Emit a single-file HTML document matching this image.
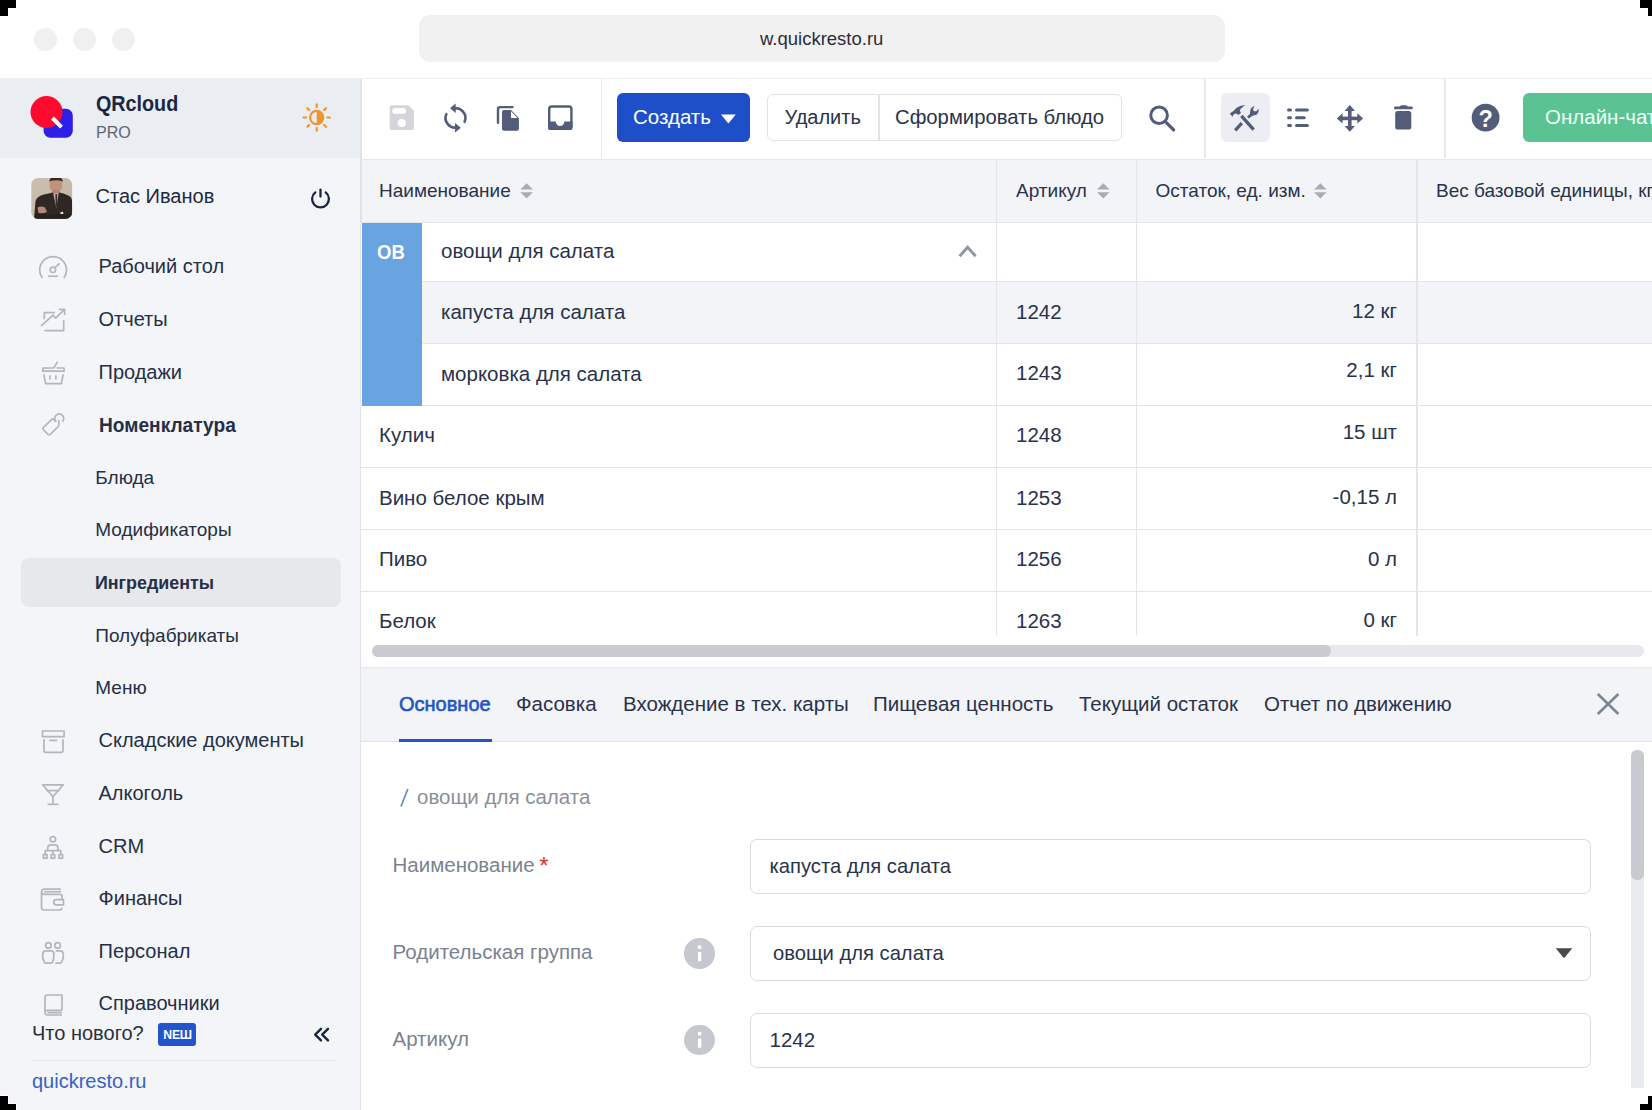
<!DOCTYPE html>
<html><head><meta charset="utf-8">
<style>
*{margin:0;padding:0;box-sizing:border-box}
html,body{width:1652px;height:1110px;overflow:hidden;background:#fff}
body{position:relative;font-family:"Liberation Sans",sans-serif;color:#1f2a44}
.a{position:absolute}
.t{position:absolute;white-space:nowrap;line-height:20px;font-size:20px}
.c{position:absolute;background:#000}
svg{position:absolute;overflow:visible}
</style></head><body>
<div class="a" style="left:0px;top:0px;width:1652px;height:79px;background:#fff;border-bottom:1px solid #ededed"></div>
<div class="a" style="left:34.0px;top:28px;width:23px;height:23px;background:#f0f0f0;border-radius:50%"></div>
<div class="a" style="left:73.0px;top:28px;width:23px;height:23px;background:#f0f0f0;border-radius:50%"></div>
<div class="a" style="left:112.0px;top:28px;width:23px;height:23px;background:#f0f0f0;border-radius:50%"></div>
<div class="a" style="left:419px;top:15px;width:806px;height:47px;background:#f1f1f1;border-radius:11px"></div>
<div class="t" style="left:760.00px;top:28.69px;font-size:18.5px;color:#2a2d3a">w.quickresto.ru</div>
<div class="a" style="left:0px;top:79px;width:362px;height:1031px;background:#f3f5f8;border-right:2px solid #e2e3e7"></div>
<div class="a" style="left:0px;top:79px;width:360px;height:79px;background:#eaedf2;"></div>
<svg style="left:0;top:0" width="1" height="1">
<rect x="43.6" y="108.8" width="29.2" height="29" rx="7" fill="#2e1ee6"/>
<circle cx="46.5" cy="112" r="16" fill="#ff0a2e"/>
<line x1="52.5" y1="118" x2="61.5" y2="127.2" stroke="#fff" stroke-width="4"/>
</svg><div class="t" style="left:95.50px;top:94.15px;font-size:21.8px;transform:scaleX(0.905);transform-origin:0 0;color:#1a2744;font-weight:700">QRcloud</div>
<div class="t" style="left:95.80px;top:121.81px;font-size:17.3px;transform:scaleX(0.93);transform-origin:0 0;color:#5d6573">PRO</div>
<svg style="left:0;top:0" width="1" height="1"><g fill="none" stroke="#f0952e" stroke-width="2.2" stroke-linecap="round"><circle cx="316.7" cy="117.5" r="6.6"/><line x1="327.30" y1="117.50" x2="329.90" y2="117.50"/><line x1="324.20" y1="125.00" x2="326.03" y2="126.83"/><line x1="316.70" y1="128.10" x2="316.70" y2="130.70"/><line x1="309.20" y1="125.00" x2="307.37" y2="126.83"/><line x1="306.10" y1="117.50" x2="303.50" y2="117.50"/><line x1="309.20" y1="110.00" x2="307.37" y2="108.17"/><line x1="316.70" y1="106.90" x2="316.70" y2="104.30"/><line x1="324.20" y1="110.00" x2="326.03" y2="108.17"/></g><path d="M316.7 110.9 A6.6 6.6 0 0 1 316.7 124.1 Z" fill="#f0952e"/></svg><svg style="left:0;top:0" width="1" height="1">
<defs><clipPath id="av"><rect x="31.3" y="178" width="40.8" height="40.7" rx="6.5"/></clipPath>
<linearGradient id="avbg" x1="0" y1="0" x2="1" y2="1"><stop offset="0" stop-color="#cdbfb2"/><stop offset="1" stop-color="#c2b2a3"/></linearGradient></defs>
<g clip-path="url(#av)">
<rect x="31" y="178" width="42" height="42" fill="url(#avbg)"/>
<ellipse cx="56" cy="185" rx="6.4" ry="8.2" fill="#bf927d"/>
<path d="M49.2 182 Q49.5 176.5 56 176.5 Q62.6 176.5 63 182 L61.8 181 Q56 179.4 50.4 181 Z" fill="#3b2a22"/>
<rect x="52.5" y="190" width="7" height="5" fill="#b08472"/>
<path d="M34 219 L35.5 201 Q37 196 44 194.5 L53 192.6 L56 195 L59.5 192.6 Q68 194.5 71 197.5 Q72.5 200 72.5 204 V219 Z" fill="#2f2725"/>
<path d="M53.2 193.2 L58.6 193.2 L56.4 208.5 Z" fill="#c8aca2"/>
<path d="M55.4 194 L57 194 L57.5 206 L55.8 208 Z" fill="#3d2c2c"/>
<path d="M37.5 207.5 Q41 205.5 45 207.5 L47 212 Q43 214 38.5 213 Z" fill="#b48872"/>
<path d="M59.5 213 L63 211.5 L63.5 215 Z" fill="#f0ece8"/>
<path d="M35 214 H72 V219 H35 Z" fill="#262020"/>
</g></svg><div class="t" style="left:95.50px;top:186.07px;font-size:20px;color:#1e2a40">Стас Иванов</div>
<svg style="left:0;top:0" width="1" height="1"><g fill="none" stroke="#1a2540" stroke-width="2.3" stroke-linecap="round">
<path d="M315.3 192.4 A8.4 8.4 0 1 0 325.7 192.4"/><line x1="320.5" y1="189.6" x2="320.5" y2="196.6"/></g></svg><div class="a" style="left:21px;top:558px;width:320px;height:49px;background:#e6e8ec;border-radius:8px"></div>
<div class="t" style="left:98.50px;top:256.17px;font-size:20px;color:#252f47">Рабочий стол</div>
<div class="t" style="left:98.50px;top:308.97px;font-size:20px;color:#252f47">Отчеты</div>
<div class="t" style="left:98.50px;top:361.87px;font-size:20px;color:#252f47">Продажи</div>
<div class="t" style="left:98.50px;top:414.67px;font-size:20px;transform:scaleX(0.957);transform-origin:0 0;color:#252f47;font-weight:700">Номенклатура</div>
<div class="t" style="left:95.30px;top:467.62px;font-size:19px;color:#252f47">Блюда</div>
<div class="t" style="left:95.30px;top:520.02px;font-size:19px;color:#252f47">Модификаторы</div>
<div class="t" style="left:95.30px;top:572.52px;font-size:19px;transform:scaleX(0.94);transform-origin:0 0;color:#252f47;font-weight:700">Ингредиенты</div>
<div class="t" style="left:95.30px;top:625.62px;font-size:19px;color:#252f47">Полуфабрикаты</div>
<div class="t" style="left:95.30px;top:677.92px;font-size:19px;color:#252f47">Меню</div>
<div class="t" style="left:98.50px;top:730.07px;font-size:20px;color:#252f47">Складские документы</div>
<div class="t" style="left:98.50px;top:782.87px;font-size:20px;color:#252f47">Алкоголь</div>
<div class="t" style="left:98.50px;top:835.77px;font-size:20px;color:#252f47">CRM</div>
<div class="t" style="left:98.50px;top:888.07px;font-size:20px;color:#252f47">Финансы</div>
<div class="t" style="left:98.50px;top:941.17px;font-size:20px;color:#252f47">Персонал</div>
<div class="t" style="left:98.50px;top:993.47px;font-size:20px;color:#252f47">Справочники</div>
<svg style="left:0;top:0" width="1" height="1"><g fill="none" stroke="#b3b6bc" stroke-width="1.7" stroke-linecap="butt" stroke-linejoin="round">
<path d="M42.4 278 A13.4 13.4 0 1 1 63.8 278"/>
<circle cx="52.9" cy="269.8" r="2.7"/>
<line x1="55" y1="267.6" x2="59.6" y2="263.3"/>
<line x1="48" y1="276.2" x2="57.8" y2="276.2"/>

<path d="M44.3 319.2 V312.6 H54.8"/>
<path d="M44.4 330.6 H63.7 V320.2"/>
<path d="M41.1 325.9 L53.1 315.2 L55.7 318.2 L64.2 309.7"/>
<path d="M58.9 309.3 H64.6 V315"/>

<path d="M53 368 H42.8 V371.2 H64 V368 H56.5"/>
<line x1="53.5" y1="368.5" x2="57.6" y2="361.8"/>
<path d="M43.8 374.4 L45.6 383.6 H61.4 L63.2 374.4"/>
<line x1="49.9" y1="375.2" x2="49.9" y2="379.4"/>
<line x1="55.9" y1="375.2" x2="55.9" y2="379.4"/>

<path d="M56.2 421.8 L53.7 419.3 Q52.7 418.3 51.7 419.3 L43.3 427.6 Q42.3 428.6 43.3 429.6 L48.2 434.5 Q49.2 435.5 50.2 434.5 L58 426.7 Q58.8 425.9 58.8 424.8 V419.9"/>
<path d="M56.1 421.7 A4.5 4.5 0 1 1 62.3 421.7"/>

<rect x="42.5" y="731" width="21.6" height="5.6"/>
<path d="M44 739.3 V750.6 Q44 752.4 45.8 752.4 H61.2 Q63 752.4 63 750.6 V739.3"/>
<line x1="49.3" y1="740.4" x2="57.2" y2="740.4"/>

<path d="M42.6 784.8 H63.3 L52.95 796.6 Z"/>
<line x1="46.5" y1="790.6" x2="59.4" y2="790.6"/>
<line x1="52.95" y1="797" x2="52.95" y2="804.2"/>
<line x1="47.6" y1="804.3" x2="58.4" y2="804.3"/>

<circle cx="52.9" cy="839.2" r="2.7"/>
<path d="M47.7 850.6 V848.4 Q47.7 844.8 51.2 844.8 H54.6 Q58.1 844.8 58.1 848.4 V850.6"/>
<path d="M45.2 854.4 V850.7 H60.8 V854.4 M52.9 850.7 V854.4"/>
<rect x="43.4" y="854.6" width="3.6" height="3.6"/>
<rect x="51.1" y="854.6" width="3.6" height="3.6"/>
<rect x="59" y="854.6" width="3.6" height="3.6"/>

<path d="M60.9 889.2 H44.4 Q41.5 889.2 41.5 892 V907.3 Q41.5 910 44.2 910 H59.4 Q61.8 910 61.9 907.8"/>
<path d="M44.2 891.8 H60.9"/>
<path d="M41.8 892.6 Q42.5 894.4 44.8 894.4 H59.8 Q62.1 894.4 62.1 896.6 V899.4"/>
<path d="M63.5 899.6 H56.3 Q53.7 899.6 53.7 902.25 Q53.7 904.9 56.3 904.9 H63.5 Z"/>

<circle cx="48.4" cy="945.4" r="2.8"/>
<circle cx="57.6" cy="945.4" r="2.8"/>
<path d="M48.6 963.1 H45.6 Q44.5 963.1 44.3 962 Q42.4 959 42.6 954.4 Q42.8 950.9 46 950.9 H50.8 Q53.9 950.9 53.9 954 Q54.1 959 52.6 962 Q52.3 963.1 51 963.1 Z"/>
<path d="M55.8 950.9 H59.6 Q63.2 950.9 63.4 954.4 Q63.6 959 61.6 962 Q61.2 963.1 60 963.1 H55.4"/>

<path d="M62 1010.3 V995 H47.2 Q45 995 45 997.2 V1012.6 Q45 1015 47.4 1015 H62"/>
<path d="M45 1011.2 Q45.2 1010.3 47.2 1010.3 H62 M47.4 1012.7 H62"/>
</g></svg><div class="a" style="left:0px;top:1016px;width:360px;height:94px;background:#f3f5f8;"></div>
<div class="t" style="left:32.00px;top:1022.97px;font-size:20px;color:#2a3040">Что нового?</div>
<div class="a" style="left:158.4px;top:1023px;width:37.3px;height:23px;background:#2255cc;border-radius:3px"></div>
<div class="t" style="left:163.30px;top:1025.37px;font-size:12.2px;color:#fff;font-weight:700;letter-spacing:-0.2px">NEШ</div>
<svg style="left:0;top:0" width="1" height="1"><g fill="none" stroke="#1a2540" stroke-width="2.4" stroke-linecap="round" stroke-linejoin="round">
<path d="M321 1028.8 L315.2 1034.6 L321 1040.4 M328 1028.8 L322.2 1034.6 L328 1040.4"/></g></svg><div class="a" style="left:32px;top:1059.5px;width:305px;height:1.6px;background:#e2e4e8;"></div>
<div class="t" style="left:32.00px;top:1070.87px;font-size:20px;color:#3462c4">quickresto.ru</div>
<div class="a" style="left:362px;top:79px;width:1290px;height:80.5px;background:#fff;border-bottom:1.5px solid #e5e6e8"></div>
<div class="a" style="left:600.5px;top:79px;width:1.8px;height:79px;background:#e8e8ea;"></div>
<div class="a" style="left:1204px;top:79px;width:1.8px;height:79px;background:#e8e8ea;"></div>
<div class="a" style="left:1444px;top:79px;width:1.8px;height:79px;background:#e8e8ea;"></div>
<svg style="left:0;top:0" width="1" height="1">
<path d="M391.7 105.3 H408.5 L413.9 110.7 V128 Q413.9 130 411.9 130 H391.7 Q389.7 130 389.7 128 V107.3 Q389.7 105.3 391.7 105.3 Z" fill="#d3d5da"/>
<rect x="392.2" y="108" width="13.8" height="5.8" rx="2.9" fill="#fff"/>
<circle cx="401.8" cy="123.1" r="4.1" fill="#fff"/>
<g fill="none" stroke="#535c78" stroke-width="2.6" stroke-linecap="round">
<path d="M446.3 114.2 A9.6 9.6 0 0 0 457.3 127.3"/>
<path d="M464.6 121.8 A9.6 9.6 0 0 0 453.6 108.6"/>
</g>
<path d="M450 108.3 L455.6 103.4 L455.8 113 Z" fill="#535c78"/>
<path d="M460.8 127.8 L455.1 132.6 L455 123 Z" fill="#535c78"/>
<path d="M498 122.8 V109.2 Q498 107.1 500.1 107.1 H512.5" fill="none" stroke="#535c78" stroke-width="2.4" stroke-linecap="round"/>
<path d="M504 110 H511 L518.9 117.9 V128.7 Q518.9 130.7 516.9 130.7 H504 Q502 130.7 502 128.7 V112 Q502 110 504 110 Z" fill="#535c78"/>
<path d="M511 111.2 V118 H517.6 Z" fill="#fff"/>
<rect x="549.2" y="106.5" width="22.2" height="22.3" rx="2.4" fill="none" stroke="#535c78" stroke-width="2.4"/>
<path d="M548 121.6 H555.8 A4.3 4.3 0 0 0 564.4 121.6 H572.5 V128 Q572.5 130 570.5 130 H550 Q548 130 548 128 Z" fill="#535c78"/>
<g fill="none" stroke="#535c78" stroke-linecap="round">
<circle cx="1159.1" cy="115.3" r="8.3" stroke-width="3"/>
<line x1="1166.6" y1="122.8" x2="1173.6" y2="129.9" stroke-width="3.3"/>
</g>
</svg><div class="a" style="left:617.3px;top:92.7px;width:133.2px;height:49.6px;background:#1f4fc8;border-radius:6px"></div>
<div class="t" style="left:633.00px;top:107.40px;font-size:20.5px;color:#fff">Создать</div>
<svg style="left:0;top:0" width="1" height="1"><path d="M721 114.4 H735.8 L728.4 123.4 Z" fill="#fff"/></svg><div class="a" style="left:767.3px;top:93.9px;width:354.7px;height:47.6px;background:#fff;border:1.5px solid #e0e2e6;border-radius:6px"></div>
<div class="a" style="left:878px;top:94.5px;width:1.5px;height:46.5px;background:#e0e2e6;"></div>
<div class="t" style="left:784.50px;top:107.07px;font-size:20px;color:#29324b">Удалить</div>
<div class="t" style="left:895.00px;top:106.97px;font-size:20.3px;color:#29324b">Сформировать блюдо</div>
<div class="a" style="left:1220.7px;top:93.2px;width:49px;height:48.4px;background:#eceef3;border-radius:6px"></div>
<svg style="left:0;top:0" width="1" height="1">
<g stroke="#535c78" fill="none" stroke-linecap="butt">
<line x1="1241.4" y1="115.84" x2="1253.66" y2="129.68" stroke-width="3.3"/>
<line x1="1235.2" y1="130.26" x2="1241.84" y2="123.05" stroke-width="3.3"/>
</g>
<path d="M1229.87 113.53 L1232.33 111.8 L1233.77 110.65 L1235.5 108.63 Q1239.53 105.17 1245.59 105.17 Q1240.4 107.77 1239.82 110.65 L1240.98 112.96 L1238.38 114.98 L1236.36 113.53 L1234.06 114.11 L1232.33 116.71 Z" fill="#535c78"/>
<path d="M1247.03 116.42 L1249.91 113.88 L1250.2 110.65 Q1250.78 107.19 1254.53 106.04 L1253.09 109.21 L1253.95 111.23 L1256.26 111.23 L1258.56 108.63 Q1259.14 113.53 1255.68 114.98 L1252.51 115.84 L1248.76 118.44 Z" fill="#535c78"/>
<g fill="#535c78">
<rect x="1287.2" y="108.5" width="4.6" height="3" rx="1.2"/>
<rect x="1287.2" y="116.2" width="4.6" height="3" rx="1.2"/>
<rect x="1287.2" y="124" width="4.6" height="3" rx="1.2"/>
<rect x="1295" y="108.5" width="13.9" height="3" rx="1.5"/>
<rect x="1295" y="116.2" width="10.7" height="3" rx="1.5"/>
<rect x="1295" y="124" width="13.9" height="3" rx="1.5"/>
<rect x="1348" y="108" width="3.6" height="21"/>
<rect x="1339" y="116.6" width="21.6" height="3.6"/>
<path d="M1349.8 105 L1355 110.9 H1344.6 Z M1349.8 131.8 L1355 125.9 H1344.6 Z M1336.8 118.4 L1342.6 113.3 V123.5 Z M1363.1 118.4 L1357.3 113.3 V123.5 Z"/>
<rect x="1394" y="106.6" width="18.8" height="2.6" rx="1.3"/>
<path d="M1399.5 107 Q1400 105.2 1402 105.2 H1405.5 Q1407.5 105.2 1408 107 Z"/>
<rect x="1395.2" y="111" width="16.1" height="18.6" rx="2.6"/>
<circle cx="1485.6" cy="117.7" r="13.9"/>
</g>
</svg><div class="t" style="left:1478.60px;top:109.06px;font-size:23.5px;color:#fff;font-weight:700">?</div>
<div class="a" style="left:1522.8px;top:93px;width:160px;height:49.4px;background:#5bc393;border-radius:6px"></div>
<div class="t" style="left:1545.00px;top:106.90px;font-size:20.5px;color:#f0fff5">Онлайн-чат</div>
<div class="a" style="left:362px;top:159.5px;width:1290px;height:63px;background:#f3f4f8;border-bottom:1px solid #e3e5e9"></div>
<div class="t" style="left:379.00px;top:180.82px;font-size:19px;color:#29324b">Наименование</div>
<div class="t" style="left:1016.00px;top:180.82px;font-size:19px;color:#29324b">Артикул</div>
<div class="t" style="left:1155.50px;top:180.82px;font-size:19px;color:#29324b">Остаток, ед. изм.</div>
<div class="t" style="left:1436.00px;top:180.82px;font-size:19px;color:#29324b">Вес базовой единицы, кг</div>
<svg style="left:0;top:0" width="1" height="1"><g fill="#a9acb6"><path d="M520.3 189.6 L526.5999999999999 183.2 L532.9 189.6 Z M520.3 192.2 L526.5999999999999 198.6 L532.9 192.2 Z"/><path d="M1097 189.6 L1103.3 183.2 L1109.6 189.6 Z M1097 192.2 L1103.3 198.6 L1109.6 192.2 Z"/><path d="M1314 189.6 L1320.3 183.2 L1326.6 189.6 Z M1314 192.2 L1320.3 198.6 L1326.6 192.2 Z"/></g></svg><div class="a" style="left:361px;top:223px;width:1291px;height:413px;background:#fff;"></div>
<div class="a" style="left:422px;top:282px;width:1230px;height:62px;background:#f2f4f8;"></div>
<div class="a" style="left:422px;top:280.7px;width:1230px;height:1.2px;background:#e3e5e9;"></div>
<div class="a" style="left:422px;top:342.7px;width:1230px;height:1.2px;background:#e3e5e9;"></div>
<div class="a" style="left:361px;top:404.7px;width:1291px;height:1.2px;background:#e3e5e9;"></div>
<div class="a" style="left:361px;top:466.7px;width:1291px;height:1.2px;background:#e3e5e9;"></div>
<div class="a" style="left:361px;top:528.7px;width:1291px;height:1.2px;background:#e3e5e9;"></div>
<div class="a" style="left:361px;top:590.7px;width:1291px;height:1.2px;background:#e3e5e9;"></div>
<div class="a" style="left:996.2px;top:159px;width:1.2px;height:477px;background:#e3e5e9;"></div>
<div class="a" style="left:1135.7px;top:159px;width:1.2px;height:477px;background:#e3e5e9;"></div>
<div class="a" style="left:1416.4px;top:159px;width:1.2px;height:477px;background:#e3e5e9;"></div>
<div class="a" style="left:362px;top:223px;width:60px;height:182.5px;background:#69a3e0;"></div>
<div class="t" style="left:377.00px;top:241.84px;font-size:19.5px;transform:scaleX(0.95);transform-origin:0 0;color:#fff;font-weight:700">OB</div>
<div class="t" style="left:441.00px;top:240.80px;font-size:20.5px;color:#29324b">овощи для салата</div>
<svg style="left:0;top:0" width="1" height="1"><path d="M959.6 256.2 L967.6 247.2 L975.6 256.2" fill="none" stroke="#8d98a6" stroke-width="2.9" stroke-linecap="butt" stroke-linejoin="miter"/></svg><div class="t" style="left:441.00px;top:302.10px;font-size:20.5px;color:#29324b">капуста для салата</div>
<div class="t" style="left:1016.00px;top:301.80px;font-size:20.5px;color:#29324b">1242</div>
<div class="t" style="left:1097.00px;top:301.40px;font-size:20.5px;color:#29324b;width:300px;text-align:right">12 кг</div>
<div class="t" style="left:441.00px;top:364.10px;font-size:20.5px;color:#29324b">морковка для салата</div>
<div class="t" style="left:1016.00px;top:363.10px;font-size:20.5px;color:#29324b">1243</div>
<div class="t" style="left:1097.00px;top:360.30px;font-size:20.5px;color:#29324b;width:300px;text-align:right">2,1 кг</div>
<div class="t" style="left:379.00px;top:425.30px;font-size:20.5px;color:#29324b">Кулич</div>
<div class="t" style="left:1016.00px;top:425.20px;font-size:20.5px;color:#29324b">1248</div>
<div class="t" style="left:1097.00px;top:421.90px;font-size:20.5px;color:#29324b;width:300px;text-align:right">15 шт</div>
<div class="t" style="left:379.00px;top:487.50px;font-size:20.5px;color:#29324b">Вино белое крым</div>
<div class="t" style="left:1016.00px;top:487.50px;font-size:20.5px;color:#29324b">1253</div>
<div class="t" style="left:1097.00px;top:486.90px;font-size:20.5px;color:#29324b;width:300px;text-align:right">-0,15 л</div>
<div class="t" style="left:379.00px;top:549.40px;font-size:20.5px;color:#29324b">Пиво</div>
<div class="t" style="left:1016.00px;top:549.40px;font-size:20.5px;color:#29324b">1256</div>
<div class="t" style="left:1097.00px;top:549.10px;font-size:20.5px;color:#29324b;width:300px;text-align:right">0 л</div>
<div class="t" style="left:379.00px;top:611.40px;font-size:20.5px;color:#29324b">Белок</div>
<div class="t" style="left:1016.00px;top:611.40px;font-size:20.5px;color:#29324b">1263</div>
<div class="t" style="left:1097.00px;top:610.40px;font-size:20.5px;color:#29324b;width:300px;text-align:right">0 кг</div>
<div class="a" style="left:361px;top:636px;width:1291px;height:31px;background:#fff;"></div>
<div class="a" style="left:371.6px;top:645px;width:1272px;height:12.2px;background:#e8e9ec;border-radius:6px"></div>
<div class="a" style="left:371.6px;top:645px;width:959px;height:12.2px;background:#c9cbd0;border-radius:6px"></div>
<div class="a" style="left:361px;top:667px;width:1291px;height:75px;background:#f3f4f8;border-top:1px solid #e6e8ec;border-bottom:1.5px solid #e2e4e8"></div>
<div class="t" style="left:399.00px;top:694.37px;font-size:20px;color:#2255c4;-webkit-text-stroke:0.6px #2255c4">Основное</div>
<div class="t" style="left:516.00px;top:694.20px;font-size:20.5px;color:#29324b">Фасовка</div>
<div class="t" style="left:623.00px;top:694.20px;font-size:20.5px;color:#29324b">Вхождение в тех. карты</div>
<div class="t" style="left:873.00px;top:694.20px;font-size:20.5px;color:#29324b">Пищевая ценность</div>
<div class="t" style="left:1079.00px;top:694.20px;font-size:20.5px;color:#29324b">Текущий остаток</div>
<div class="t" style="left:1264.00px;top:694.20px;font-size:20.5px;color:#29324b">Отчет по движению</div>
<div class="a" style="left:399px;top:739px;width:92.5px;height:3.2px;background:#2255c4;"></div>
<svg style="left:0;top:0" width="1" height="1"><path d="M1597.8 694 L1618.4 714 M1618.4 694 L1597.8 714" stroke="#7a8595" stroke-width="2.6" fill="none"/></svg><div class="a" style="left:361px;top:742px;width:1291px;height:368px;background:#fff;"></div>
<div class="a" style="left:1631px;top:750px;width:13px;height:338px;background:#e9eaed;border-radius:6px 6px 0 0"></div>
<div class="a" style="left:1631px;top:750px;width:13px;height:130px;background:#c8cacf;border-radius:6px"></div>
<svg style="left:0;top:0" width="1" height="1"><line x1="407.8" y1="789" x2="401" y2="806.5" stroke="#6a8fc0" stroke-width="1.8"/></svg><div class="t" style="left:417.00px;top:786.70px;font-size:20.5px;color:#8a9099">овощи для салата</div>
<div class="t" style="left:392.50px;top:855.10px;font-size:20.5px;color:#7a8290">Наименование</div>
<div class="t" style="left:392.50px;top:942.10px;font-size:20.5px;color:#7a8290">Родительская группа</div>
<div class="t" style="left:392.50px;top:1029.10px;font-size:20.5px;color:#7a8290">Артикул</div>
<div class="t" style="left:539.20px;top:856.18px;font-size:24px;color:#e0302a">*</div>
<div class="a" style="left:684.2px;top:938.2px;width:30.6px;height:30.6px;background:#c5c8ce;border-radius:50%"></div>
<svg style="left:0;top:0" width="1" height="1"><rect x="698" y="945.40" width="3.3" height="3.5" fill="#fff"/><rect x="698" y="952.00" width="3.3" height="9.3" fill="#fff"/></svg><div class="a" style="left:684.2px;top:1024.7px;width:30.6px;height:30.6px;background:#c5c8ce;border-radius:50%"></div>
<svg style="left:0;top:0" width="1" height="1"><rect x="698" y="1031.90" width="3.3" height="3.5" fill="#fff"/><rect x="698" y="1038.50" width="3.3" height="9.3" fill="#fff"/></svg><div class="a" style="left:749.5px;top:839px;width:841.2px;height:54.6px;background:#fff;border:1.5px solid #d8dbdf;border-radius:7px"></div>
<div class="a" style="left:749.5px;top:926px;width:841.2px;height:54.6px;background:#fff;border:1.5px solid #d8dbdf;border-radius:7px"></div>
<div class="a" style="left:749.5px;top:1013px;width:841.2px;height:54.6px;background:#fff;border:1.5px solid #d8dbdf;border-radius:7px"></div>
<div class="t" style="left:769.50px;top:856.40px;font-size:20.2px;color:#29324b">капуста для салата</div>
<div class="t" style="left:773.00px;top:943.00px;font-size:20.2px;color:#29324b">овощи для салата</div>
<div class="t" style="left:769.50px;top:1029.90px;font-size:20.5px;color:#29324b">1242</div>
<svg style="left:0;top:0" width="1" height="1"><path d="M1555.7 948.3 H1572.3 L1564 958.3 Z" fill="#4a4a4a"/></svg><div class="c" style="left:0;top:0;width:16px;height:8px"></div>
<div class="c" style="left:0;top:8px;width:8px;height:8px"></div>
<div class="c" style="left:1640px;top:0;width:12px;height:8px"></div>
<div class="c" style="left:1648px;top:8px;width:4px;height:8px"></div>
<div class="a" style="left:0;top:1095px;width:9px;height:15px;background:#fff"></div>
<div class="a" style="left:0;top:1103px;width:17px;height:7px;background:#fff"></div>
<div class="c" style="left:0;top:1096px;width:8px;height:8px"></div>
<div class="c" style="left:0;top:1104px;width:16px;height:6px"></div>
<div class="c" style="left:1648px;top:1096px;width:4px;height:8px"></div>
<div class="c" style="left:1640px;top:1104px;width:12px;height:6px"></div>
</body></html>
